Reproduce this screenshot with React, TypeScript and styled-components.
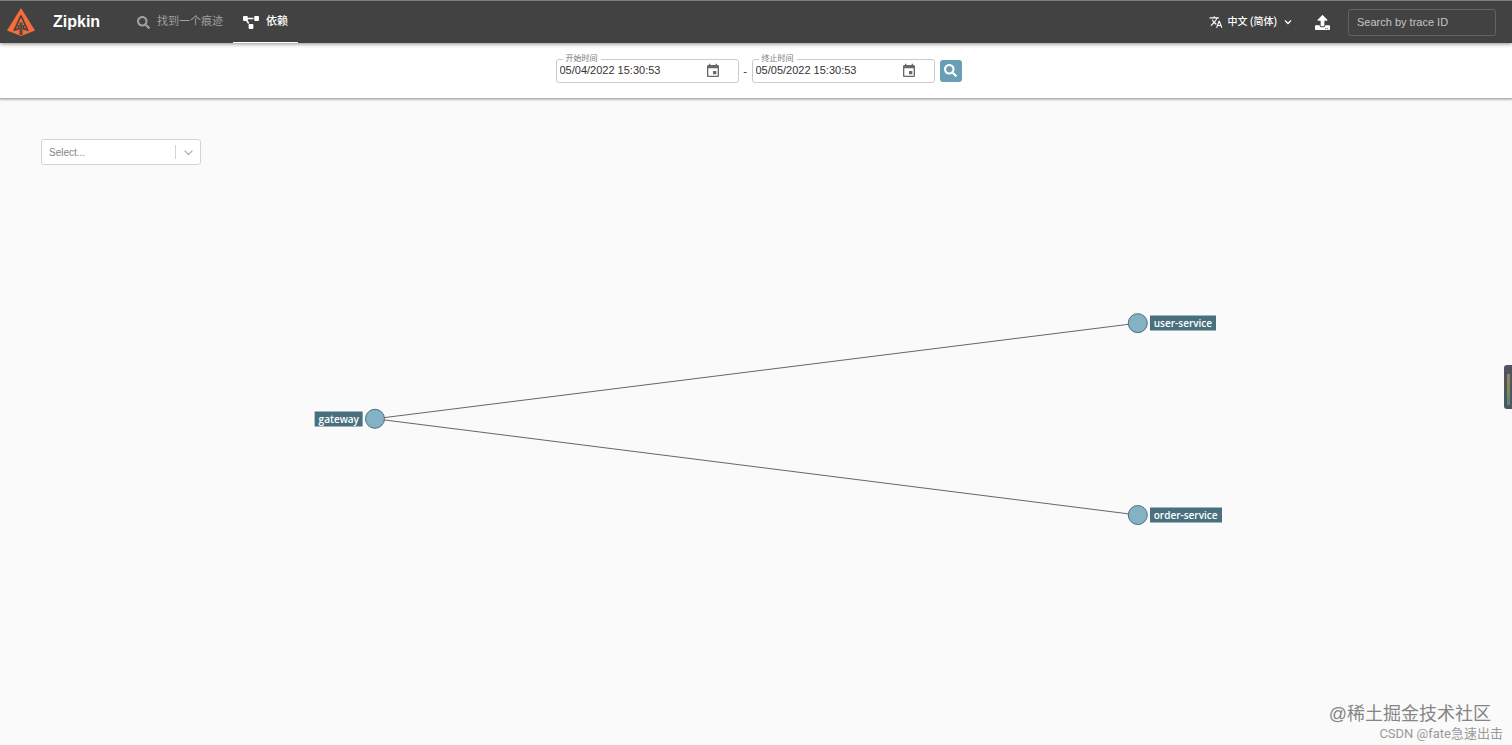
import React from "react";
import styled, { createGlobalStyle, css } from "styled-components";

const Global = createGlobalStyle`
  * { box-sizing: border-box; }
  body {
    margin: 0;
    background: #fafafa;
    font-family: Roboto, "Noto Sans CJK SC", sans-serif;
    color: #333;
  }
  button, input, select { font: inherit; margin: 0; }
`;

const arial = css`
  font-family: "Liberation Sans", "Noto Sans CJK SC", sans-serif;
`;

const Page = styled.div`
  display: flex;
  flex-direction: column;
  min-height: 100vh;
`;

const Header = styled.header`
  position: relative;
  z-index: 2;
  display: flex;
  align-items: center;
  height: 43px;
  padding: 0 16px 0 7px;
  background: #424242;
  border-top: 1px solid #7c807d;
  box-shadow: 0 1px 4px rgba(0, 0, 0, 0.45);
`;

const Brand = styled.a`
  display: flex;
  align-items: center;
  gap: 18px;
  width: 120px;
  color: #fff;
  text-decoration: none;
`;

const Title = styled.h1`
  ${arial}
  margin: 0;
  font-size: 16px;
  line-height: 20px;
  font-weight: 700;
`;

const Nav = styled.nav`
  display: flex;
  flex: 1;
  align-self: stretch;
`;

const Tab = styled.a<{ $active?: boolean }>`
  display: flex;
  align-items: center;
  gap: 7px;
  padding: 1px 10px 0;
  font-size: 11px;
  line-height: 16px;
  text-decoration: none;
  color: ${(p) => (p.$active ? "#fff" : "#a0a0a0")};
  font-weight: ${(p) => (p.$active ? 500 : 400)};
  border-bottom: 1px solid ${(p) => (p.$active ? "#fff" : "transparent")};
`;

const Language = styled.button`
  display: flex;
  align-items: center;
  gap: 5px;
  padding: 0;
  border: 0;
  background: none;
  color: #fff;
  font-size: 10px;
  line-height: 16px;
  font-weight: 500;
  margin-right: 21px;
`;

const Upload = styled.button`
  display: flex;
  padding: 0;
  border: 0;
  background: none;
  color: #fff;
  margin-right: 18px;
`;

const TraceInput = styled.input`
  ${arial}
  width: 148px;
  height: 27px;
  padding: 0 8px;
  border: 1px solid #636363;
  border-radius: 3px;
  background: transparent;
  color: #fff;
  font-size: 11px;
  &::placeholder { color: #c6c6c6; opacity: 1; }
`;

const SearchBar = styled.form`
  position: relative;
  z-index: 1;
  display: flex;
  justify-content: center;
  align-items: center;
  height: 56px;
  padding: 0 0 0 5px;
  background: #fff;
  border-bottom: 1px solid #b0b0b0;
  box-shadow: 0 1px 2px rgba(0, 0, 0, 0.25);
`;

const Field = styled.div`
  position: relative;
  display: flex;
  align-items: center;
  width: 183px;
  height: 24px;
  padding: 0 17px 0 3px;
  border: 1px solid #cbcbcb;
  border-radius: 3px;
`;

const FieldLabel = styled.label`
  position: absolute;
  top: -6px;
  left: 6px;
  padding: 0 3px;
  background: #fff;
  color: #777;
  font-size: 8px;
  line-height: 10px;
`;

const FieldInput = styled.input`
  ${arial}
  flex: 1;
  min-width: 0;
  height: 20px;
  padding: 0 0 2px;
  border: 0;
  background: none;
  color: #333;
  font-size: 11px;
`;

const CalendarButton = styled.button`
  display: flex;
  padding: 0;
  border: 0;
  background: none;
  color: #686868;
`;

const Dash = styled.span`
  ${arial}
  width: 13px;
  text-align: center;
  font-size: 11px;
`;

const SearchButton = styled.button`
  display: flex;
  align-items: center;
  justify-content: center;
  width: 22px;
  height: 22px;
  margin-left: 5px;
  padding: 0;
  border: 0;
  border-radius: 3px;
  background: #689fb5;
  color: #fff;
`;

const Main = styled.main`
  position: relative;
  flex: 1;
  padding: 40px 41px;
`;

const SelectBox = styled.div`
  position: relative;
  z-index: 1;
  display: flex;
  align-items: center;
  justify-content: flex-end;
  width: 160px;
  height: 26px;
`;

const ServiceSelect = styled.select`
  ${arial}
  appearance: none;
  width: 100%;
  height: 26px;
  padding: 0 32px 0 7px;
  border: 1px solid #d2d2d2;
  border-radius: 3px;
  background: #fff;
  color: #858585;
  font-size: 10px;
`;

const SelectMark = styled.span`
  position: absolute;
  right: 7px;
  display: flex;
  align-items: center;
  gap: 7px;
  height: 14px;
  padding-left: 7px;
  border-left: 1px solid #d2d2d2;
  color: #b4b4b4;
  pointer-events: none;
`;

const Graph = styled.div`
  position: absolute;
  inset: 0;
  overflow: hidden;
`;

const Edges = styled.svg`
  display: block;
  width: 100%;
  height: 100%;
`;

const NodeLabel = styled.span<{ $before?: boolean }>`
  position: absolute;
  transform: translate(${(p) => (p.$before ? "calc(-100% - 12px)" : "12px")}, -50%);
  padding: 0 4px 1px;
  background: #49707f;
  color: #fff;
  font-family: "Open Sans", sans-serif;
  font-size: 10px;
  line-height: 14px;
  font-weight: 600;
  white-space: nowrap;
`;

const Gauge = styled.aside`
  position: fixed;
  right: 0;
  top: 49%;
  width: 8px;
  height: 44px;
  padding: 9px 2px 4px 3px;
  border-radius: 3px 0 0 3px;
  background: #50545f;
`;

const GaugeFill = styled.div`
  height: 100%;
  background: linear-gradient(#a08058, #7f8b50 50%, #3f8f86);
`;

const Watermarks = styled.footer`
  position: absolute;
  right: 9px;
  bottom: 1px;
  display: flex;
  flex-direction: column;
  align-items: flex-end;
  ${arial}
`;

const Community = styled.span`
  padding-right: 12px;
  font-size: 18px;
  line-height: 20px;
  color: #858585;
`;

const Author = styled.span`
  font-family: Roboto, "Noto Sans CJK SC", sans-serif;
  font-size: 13px;
  line-height: 20px;
  color: #999;
`;

const Logo = () => (
  <svg width="28" height="28" viewBox="0 0 28 28" aria-hidden="true">
    <path d="M14 0 28 22.5 14 28 0 22.5Z" fill="#f76d3a" />
    <path d="M13.200 27V14.500M14.800 27V14.500" stroke="#424242" strokeWidth="1.300" />
    <path d="M11.500 17v3.800l-4 1.200L13.800 8h.4l6.300 14-4-1.200V17" fill="none" stroke="#424242" strokeWidth="1.700" />
  </svg>
);

const SearchIcon = ({ size }: { size: number }) => (
  <svg width={size} height={size} viewBox="0 0 512 512" fill="currentColor" aria-hidden="true">
    <path d="M505 442.7 405.300 343c-4.500-4.500-10.600-7-17-7H372c27.600-35.300 44-79.700 44-128C416 93.100 322.900 0 208 0S0 93.100 0 208s93.100 208 208 208c48.300 0 92.700-16.400 128-44v16.300c0 6.400 2.500 12.500 7 17l99.700 99.700c9.400 9.400 24.600 9.400 33.900 0l28.300-28.300c9.400-9.400 9.400-24.600.1-34zM208 336c-70.700 0-128-57.200-128-128 0-70.700 57.200-128 128-128 70.700 0 128 57.200 128 128 0 70.700-57.200 128-128 128z" />
  </svg>
);

const DiagramIcon = () => (
  <svg width="16" height="13" viewBox="0 0 640 512" fill="currentColor" aria-hidden="true">
    <path d="M384 320H256c-17.670 0-32 14.330-32 32v128c0 17.670 14.330 32 32 32h128c17.670 0 32-14.330 32-32V352c0-17.670-14.330-32-32-32zM192 32c0-17.670-14.330-32-32-32H32C14.330 0 0 14.330 0 32v128c0 17.670 14.330 32 32 32h95.720l73.160 128.040C211.980 300.980 232.400 288 256 288h.28L192 175.510V128h224V64H192V32zM608 0H480c-17.670 0-32 14.330-32 32v128c0 17.670 14.330 32 32 32h128c17.670 0 32-14.330 32-32V32c0-17.670-14.330-32-32-32z" />
  </svg>
);

const TranslateIcon = () => (
  <svg width="14" height="14" viewBox="0 0 24 24" fill="currentColor" aria-hidden="true">
    <path d="m12.870 15.070-2.540-2.510.03-.03c1.740-1.940 2.980-4.170 3.710-6.530H17V4h-7V2H8v2H1v1.990h11.170C11.500 7.920 10.440 9.750 9 11.350 8.070 10.320 7.300 9.190 6.690 8h-2c.73 1.630 1.730 3.170 2.980 4.560l-5.090 5.020L4 19l5-5 3.110 3.110.76-2.040zM18.500 10h-2L12 22h2l1.120-3h4.750L21 22h2l-4.500-12zm-2.620 7 1.620-4.330L19.120 17h-3.240z" />
  </svg>
);

const Chevron = ({ size, width = 2 }: { size: number; width?: number }) => (
  <svg width={size} height={size} viewBox="0 0 12 12" fill="none" stroke="currentColor" strokeWidth={width} aria-hidden="true">
    <path d="m3 4.500 3 3 3-3" />
  </svg>
);

const SelectChevron = () => (
  <svg width="11" height="11" viewBox="0 0 11 11" fill="none" stroke="currentColor" strokeWidth="1.300" strokeLinecap="round" aria-hidden="true">
    <path d="m2 4 3.500 3.500L9 4" />
  </svg>
);

const UploadIcon = () => (
  <svg width="15" height="15" viewBox="0 0 512 512" fill="currentColor" aria-hidden="true">
    <path d="M296 384h-80c-13.300 0-24-10.700-24-24V192h-87.700c-17.800 0-26.700-21.500-14.100-34.100L242.300 5.700c7.500-7.500 19.800-7.500 27.300 0l152.200 152.200c12.600 12.600 3.700 34.100-14.100 34.100H320v168c0 13.300-10.700 24-24 24zm216-8v112c0 13.300-10.700 24-24 24H24c-13.300 0-24-10.700-24-24V376c0-13.300 10.700-24 24-24h136v8c0 30.900 25.100 56 56 56h80c30.900 0 56-25.100 56-56v-8h136c13.300 0 24 10.700 24 24zm-124 88c0-11-9-20-20-20s-20 9-20 20 9 20 20 20 20-9 20-20zm64 0c0-11-9-20-20-20s-20 9-20 20 9 20 20 20 20-9 20-20z" />
  </svg>
);

const CalendarIcon = () => (
  <svg width="16" height="16" viewBox="0 0 24 24" fill="currentColor" aria-hidden="true">
    <path d="M17 12h-5v5h5v-5zM16 1v2H8V1H6v2H5c-1.110 0-1.990.9-1.990 2L3 19c0 1.100.89 2 2 2h14c1.100 0 2-.9 2-2V5c0-1.100-.9-2-2-2h-1V1h-2zm3 18H5V8h14v11z" />
  </svg>
);

const DateField = ({ id, label, value }: { id: string; label: string; value: string }) => (
  <Field>
    <FieldLabel htmlFor={id}>{label}</FieldLabel>
    <FieldInput id={id} defaultValue={value} />
    <CalendarButton type="button" aria-label={label}>
      <CalendarIcon />
    </CalendarButton>
  </Field>
);

const nodes = [
  { name: "gateway", x: "24.8%", y: "49.500%", before: true },
  { name: "user-service", x: "75.25%", y: "34.700%", before: false },
  { name: "order-service", x: "75.25%", y: "64.400%", before: false },
];

export default function App() {
  const [root, ...children] = nodes;
  return (
    <Page>
      <Global />
      <Header>
        <Brand href="#">
          <Logo />
          <Title>Zipkin</Title>
        </Brand>
        <Nav>
          <Tab href="#find">
            <SearchIcon size={13} />
            找到一个痕迹
          </Tab>
          <Tab href="#dependency" $active>
            <DiagramIcon />
            依赖
          </Tab>
        </Nav>
        <Language type="button">
          <TranslateIcon />
          中文 (简体)
          <Chevron size={12} width={1.3} />
        </Language>
        <Upload type="button" aria-label="Upload">
          <UploadIcon />
        </Upload>
        <TraceInput placeholder="Search by trace ID" aria-label="Search by trace ID" />
      </Header>
      <SearchBar>
        <DateField id="start" label="开始时间" value="05/04/2022 15:30:53" />
        <Dash>-</Dash>
        <DateField id="end" label="终止时间" value="05/05/2022 15:30:53" />
        <SearchButton type="button" aria-label="Search">
          <SearchIcon size={13} />
        </SearchButton>
      </SearchBar>
      <Main>
        <Graph>
          <Edges aria-hidden="true">
            {children.map((n) => (
              <line key={n.name} x1={root.x} y1={root.y} x2={n.x} y2={n.y} stroke="#666" strokeWidth="1" />
            ))}
            {nodes.map((n) => (
              <circle key={n.name} cx={n.x} cy={n.y} r="9.500" fill="#85b1c4" stroke="#49707f" />
            ))}
          </Edges>
          {nodes.map((n) => (
            <NodeLabel key={n.name} $before={n.before} style={{ left: n.x, top: n.y }}>
              {n.name}
            </NodeLabel>
          ))}
        </Graph>
        <SelectBox>
          <ServiceSelect aria-label="Service" defaultValue="">
            <option value="">Select...</option>
            {nodes.map((n) => (
              <option key={n.name}>{n.name}</option>
            ))}
          </ServiceSelect>
          <SelectMark>
            <SelectChevron />
          </SelectMark>
        </SelectBox>
        <Watermarks>
          <Community>@稀土掘金技术社区</Community>
          <Author>CSDN @fate急速出击</Author>
        </Watermarks>
      </Main>
      <Gauge aria-hidden="true">
        <GaugeFill />
      </Gauge>
    </Page>
  );
}
